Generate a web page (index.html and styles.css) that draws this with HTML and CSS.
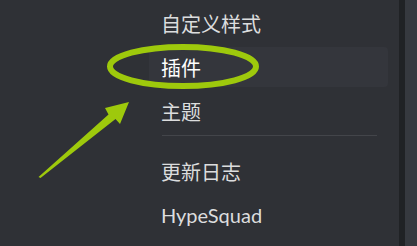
FILE: index.html
```html
<!DOCTYPE html>
<html lang="zh-CN">
<head>
    <meta charset="UTF-8">
    <title>设置</title>
    <link rel="stylesheet" href="styles.css">
</head>
<body>
    <div class="layout">
        <nav class="sidebar">
            <div class="menu">
                <div class="menu-item">自定义样式</div>
                <div class="menu-item hover">插件</div>
                <div class="menu-item">主题</div>
                <div class="separator"></div>
                <div class="menu-item">更新日志</div>
                <div class="menu-item">HypeSquad</div>
            </div>
        </nav>
        <div class="divider"></div>
        <main class="content"></main>
    </div>

    <!-- annotation drawn over the screenshot -->
    <svg class="markup" width="417" height="246" viewBox="0 0 417 246">
        <ellipse cx="183" cy="66.5" rx="73" ry="19.5" fill="none" stroke="#9ec90c" stroke-width="6"/>
        <polygon points="129,102 120,124 115.5,119 40.5,178 38.5,177 108.5,114.5 105,108" fill="#9ec90c"/>
    </svg>
</body>
</html>
```

FILE: styles.css
```css
* {
    margin: 0;
    padding: 0;
    box-sizing: border-box;
}

body {
    font-family: Lato, 'Noto Sans CJK SC', sans-serif;
    background: #2f3136;
    color: #dcddde;
    width: 417px;
    height: 246px;
    overflow: hidden;
    position: relative;
}

.layout {
    display: flex;
    height: 100%;
}

.sidebar {
    width: 399px;
    padding: 3px 11px 0 149px;
    background: #2f3136;
}

.menu {
    display: flex;
    flex-direction: column;
    gap: 4px;
}

.menu-item {
    height: 40px;
    padding-left: 12px;
    display: flex;
    align-items: center;
    font-size: 20px;
    border-radius: 4px;
    color: #dcddde;
}

.menu-item.hover {
    background: #34363c;
    color: #ffffff;
}

.separator {
    height: 1px;
    background: #43454a;
    margin: 0 0 11px 13px;
    width: 215px;
}

.divider {
    width: 6px;
    background: #202225;
}

.content {
    flex: 1;
    background: #36393f;
}

.markup {
    position: absolute;
    left: 0;
    top: 0;
}
```
